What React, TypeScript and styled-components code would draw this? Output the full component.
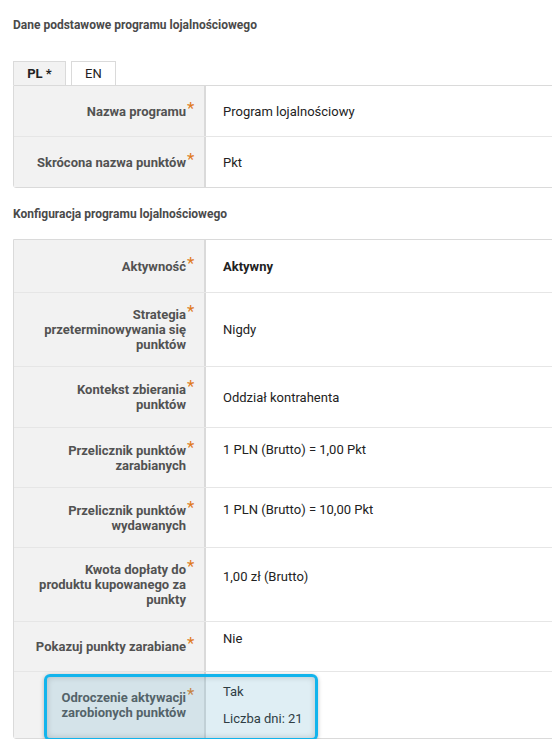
import React from 'react';
import styled, { createGlobalStyle } from 'styled-components';

const GlobalStyle = createGlobalStyle`
    html, body {
        margin: 0;
        padding: 0;
        background: #ffffff;
        overflow: hidden;
    }
    body {
        font-family: Roboto, "Liberation Sans", Arial, sans-serif;
        color: #222;
    }
`

const Page = styled.div`
    width: 600px;
    padding: 18px 0 0 13px;
`

const SectionTitle = styled.h2<{ $gap: number }>`
    margin: 0 0 ${({ $gap }) => $gap}px 0;
    font-size: 12px;
    line-height: 14px;
    font-weight: 700;
    color: #4a4a4a;
`

const Tabs = styled.div`
    display: flex;
    gap: 5px;
`

const Tab = styled.div<{ $active?: boolean }>`
    height: 23px;
    padding: 0 13px;
    display: flex;
    align-items: center;
    justify-content: center;
    border: 1px solid #dadada;
    border-bottom: none;
    background: ${({ $active }) => ($active ? '#f2f2f2' : '#ffffff')};
    font-size: 13px;
    font-weight: ${({ $active }) => ($active ? 700 : 400)};
    color: #222;
    min-width: ${({ $active }) => ($active ? '25px' : '16px')};
`

const Table = styled.div<{ $after: number }>`
    width: 570px;
    border: 1px solid #dadada;
    border-radius: 0 0 3px 3px;
    margin-bottom: ${({ $after }) => $after}px;
`

const Row = styled.div<{ $h: number }>`
    position: relative;
    display: grid;
    grid-template-columns: 192px 1fr;
    min-height: ${({ $h }) => $h}px;
    border-bottom: 1px solid #e6e6e6;
    &:last-child {
        border-bottom: none;
    }
`

const Label = styled.div`
    display: flex;
    align-items: center;
    justify-content: flex-end;
    padding: 0 18px 0 10px;
    background: #f2f2f2;
    border-right: 2px solid #dadada;
    text-align: right;
`

const LabelText = styled.span`
    position: relative;
    display: inline-block;
    max-width: 152px;
    font-size: 13px;
    line-height: 15px;
    font-weight: 700;
    color: #525252;
`

const Required = styled.span`
    position: absolute;
    left: 100%;
    top: -4px;
    margin-left: 1px;
    font-size: 17px;
    line-height: 17px;
    font-weight: 400;
    color: #e07a1f;
`

const Value = styled.div<{ $lift?: boolean; $bold?: boolean }>`
    display: flex;
    flex-direction: column;
    justify-content: center;
    gap: 12px;
    padding: 0 17px ${({ $lift }) => ($lift ? '17px' : '0')} 17px;
    font-size: 13px;
    line-height: 15px;
    font-weight: ${({ $bold }) => ($bold ? 700 : 400)};
    color: #222;
`

const Highlight = styled.div`
    position: absolute;
    left: 30px;
    top: 2px;
    width: 268px;
    height: 61px;
    border: 3px solid #12b4ec;
    border-radius: 6px;
    background: rgba(96, 168, 200, 0.2);
    box-shadow: inset 0 0 6px rgba(0, 0, 0, 0.18), 0 1px 4px rgba(0, 0, 0, 0.25);
    pointer-events: none;
`

type Field = {
    label: string;
    values: string[];
    h: number;
    lift?: boolean;
    bold?: boolean;
    mark?: boolean;
};

const basic: Field[] = [
    { label: 'Nazwa programu', values: ['Program lojalnościowy'], h: 50 },
    { label: 'Skrócona nazwa punktów', values: ['Pkt'], h: 50 },
];

const config: Field[] = [
    { label: 'Aktywność', values: ['Aktywny'], h: 52, bold: true },
    { label: 'Strategia przeterminowywania się punktów', values: ['Nigdy'], h: 73 },
    { label: 'Kontekst zbierania punktów', values: ['Oddział kontrahenta'], h: 60 },
    { label: 'Przelicznik punktów zarabianych', values: ['1 PLN (Brutto) = 1,00 Pkt'], h: 59, lift: true },
    { label: 'Przelicznik punktów wydawanych', values: ['1 PLN (Brutto) = 10,00 Pkt'], h: 59, lift: true },
    { label: 'Kwota dopłaty do produktu kupowanego za punkty', values: ['1,00 zł (Brutto)'], h: 73, lift: true },
    { label: 'Pokazuj punkty zarabiane', values: ['Nie'], h: 49, lift: true },
    { label: 'Odroczenie aktywacji zarobionych punktów', values: ['Tak', 'Liczba dni: 21'], h: 66, mark: true },
];

const FieldRow = ({ field }: { field: Field }) => (
    <Row $h={field.h}>
        <Label>
            <LabelText>
                {field.label}
                <Required>*</Required>
            </LabelText>
        </Label>
        <Value $lift={field.lift} $bold={field.bold}>
            {field.values.map((v) => <div key={v}>{v}</div>)}
        </Value>
        {field.mark && <Highlight />}
    </Row>
)

const App = () => {
    return (
        <>
            <GlobalStyle />
            <Page>
                <SectionTitle $gap={29}>Dane podstawowe programu lojalnościowego</SectionTitle>
                <Tabs>
                    <Tab $active>PL *</Tab>
                    <Tab>EN</Tab>
                </Tabs>
                <Table $after={19}>
                    {basic.map((f) => <FieldRow key={f.label} field={f} />)}
                </Table>
                <SectionTitle $gap={18}>Konfiguracja programu lojalnościowego</SectionTitle>
                <Table $after={0}>
                    {config.map((f) => <FieldRow key={f.label} field={f} />)}
                </Table>
            </Page>
        </>
    )
}

export default App
